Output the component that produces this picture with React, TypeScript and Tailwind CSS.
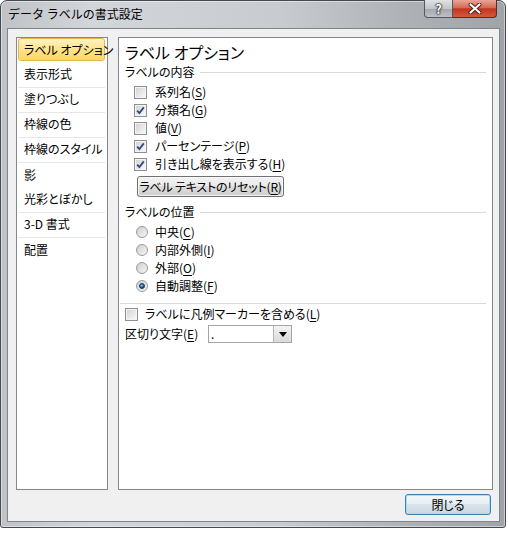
import * as React from 'react'

const fontClass = "font-['Noto_Sans_CJK_JP','Noto_Sans',sans-serif] [font-feature-settings:'palt']"

const navItems = [
  { label: 'ラベル オプション', selected: true, sep: false },
  { label: '表示形式', selected: false, sep: true },
  { label: '塗りつぶし', selected: false, sep: true },
  { label: '枠線の色', selected: false, sep: true },
  { label: '枠線のスタイル', selected: false, sep: true },
  { label: '影', selected: false, sep: false },
  { label: '光彩とぼかし', selected: false, sep: true },
  { label: '3-D 書式', selected: false, sep: true },
  { label: '配置', selected: false, sep: false },
]

function Key({ k }: { k: string }) {
  return (
    <>
      (<span className="underline underline-offset-2">{k}</span>)
    </>
  )
}

function CheckBox({ checked }: { checked: boolean }) {
  return (
    <span className="flex h-[13px] w-[13px] shrink-0 items-center justify-center border border-[#8e8f8f] bg-white">
      <span className="flex h-[11px] w-[11px] items-center justify-center border border-[#f4f4f4] bg-[linear-gradient(135deg,#d4d4d4,#f7f7f7)]">
        {checked && (
          <svg width="9" height="9" viewBox="0 0 9 9">
            <path d="M1.2 4.6 L3.4 7 L7.8 1.4" fill="none" stroke="#33477a" strokeWidth="1.8" />
          </svg>
        )}
      </span>
    </span>
  )
}

function Radio({ checked }: { checked: boolean }) {
  return (
    <span className="flex h-[12px] w-[12px] shrink-0 items-center justify-center rounded-full border border-[#9a9a9a] bg-[linear-gradient(135deg,#cfcfcf,#f6f6f6)]">
      {checked && <span className="h-[6px] w-[6px] rounded-full border border-[#0c3560] bg-[radial-gradient(circle_at_40%_35%,#8cc4f0,#1d5c9c_60%,#0b2f58)]" />}
    </span>
  )
}

function SectionHeader({ text }: { text: string }) {
  return (
    <div className="flex h-[16px] items-center gap-[6px] leading-[16px]">
      <span>{text}</span>
      <span className="h-px flex-1 bg-[#d9d9d9]" />
    </div>
  )
}

export default function App() {
  const contents = [
    { label: '系列名', k: 'S', checked: false },
    { label: '分類名', k: 'G', checked: true },
    { label: '値', k: 'V', checked: false },
    { label: 'パーセンテージ', k: 'P', checked: true },
    { label: '引き出し線を表示する', k: 'H', checked: true },
  ]
  const positions = [
    { label: '中央', k: 'C', checked: false },
    { label: '内部外側', k: 'I', checked: false },
    { label: '外部', k: 'O', checked: false },
    { label: '自動調整', k: 'F', checked: true },
  ]

  return (
    <div className={`h-[538px] w-[508px] bg-white text-[12px] text-black ${fontClass}`}>
      <div className="relative flex h-[528px] w-[506px] flex-col rounded-t-[7px] rounded-b-[3px] border border-[#464a50] bg-[linear-gradient(90deg,#bfc3c8_0%,#d2d5d9_18%,#c8cbcf_55%,#aeb1b5_80%,#a0a3a7_100%)] shadow-[inset_0_0_0_1px_rgba(255,255,255,0.45)]">
        <div className="flex h-[27px] shrink-0 items-center pl-[7px] pb-[1px]">
          <span className="text-[12px] leading-none [font-feature-settings:normal]">データ ラベルの書式設定</span>
        </div>

        <div className="absolute right-[8px] top-[-1px] flex h-[18px]">
          <div className="flex w-[29px] items-center justify-center rounded-bl-[4px] border border-t-0 border-[#55585e] bg-[linear-gradient(180deg,#e0e2e5_0%,#c3c6ca_50%,#a4a7ac_52%,#bdc0c4_100%)]">
            <span className="text-[13px] font-bold leading-none text-white [text-shadow:0_0_1px_#222,0_0_1px_#222,0_0_2px_#333,0_0_2px_#333]">?</span>
          </div>
          <div className="flex w-[44px] items-center justify-center rounded-br-[4px] border border-l-0 border-t-0 border-[#5a2a24] bg-[linear-gradient(180deg,#e9a597_0%,#d66a54_45%,#c3341f_52%,#d25a3b_100%)]">
            <svg width="14" height="11" viewBox="0 0 14 11">
              <path d="M2.5 1.5 L11.5 9.5 M11.5 1.5 L2.5 9.5" stroke="#4a1a14" strokeWidth="4" strokeLinecap="round" />
              <path d="M2.5 1.5 L11.5 9.5 M11.5 1.5 L2.5 9.5" stroke="#ffffff" strokeWidth="2.2" strokeLinecap="round" />
            </svg>
          </div>
        </div>

        <div className="mb-[5px] ml-[6px] mr-[5px] flex flex-1 flex-col border border-[#7f858c] bg-[#f0f0f0] pb-[6px] pl-[8px] pr-[6px] pt-[8px]">
          <div className="flex min-h-0 flex-1 gap-[10px]">
            <div className="w-[92px] shrink-0 border border-[#828790] bg-white">
              {navItems.map((item) => (
                <div key={item.label} className="h-[25px] pl-[1px] pr-[2px]">
                  <div
                    className={
                      item.selected
                        ? 'flex h-[23px] items-center rounded-[3px] border border-[#e2b84e] bg-[linear-gradient(180deg,#fff3c4_0%,#ffe58f_45%,#ffd862_100%)] pl-[5px] whitespace-nowrap'
                        : item.sep
                          ? 'flex h-[25px] items-center border-b border-[#e6e6e6] pb-[2px] pl-[6px] whitespace-nowrap'
                          : 'flex h-[25px] items-center pb-[2px] pl-[6px] whitespace-nowrap'
                    }
                  >
                    {item.label}
                  </div>
                </div>
              ))}
            </div>

            <div className="w-[375px] shrink-0 border border-[#828790] bg-white pl-[6px] pr-[6px] pt-[4px]">
              <div className="h-[20px] text-[16px] leading-[20px]">ラベル オプション</div>

              <div className="mt-[2px]">
                <SectionHeader text="ラベルの内容" />
              </div>
              <div className="mt-[3px] pl-[9px]">
                {contents.map((c) => (
                  <div key={c.label} className="flex h-[18px] items-center gap-[8px]">
                    <CheckBox checked={c.checked} />
                    <span className="leading-[18px]">
                      {c.label}
                      <Key k={c.k} />
                    </span>
                  </div>
                ))}
              </div>
              <div className="mt-[3px] pl-[12px]">
                <button
                  type="button"
                  className="flex h-[21px] w-[147px] items-center justify-center rounded-[3px] border border-[#707070] bg-[linear-gradient(180deg,#f2f2f2_0%,#ebebeb_45%,#dddddd_50%,#cfcfcf_100%)] text-[12px] shadow-[inset_0_0_0_1px_rgba(255,255,255,0.7)]"
                >
                  <span className="whitespace-nowrap leading-[18px] tracking-[-0.2px]">
                    ラベル テキストのリセット
                    <Key k="R" />
                  </span>
                </button>
              </div>

              <div className="mt-[7px]">
                <SectionHeader text="ラベルの位置" />
              </div>
              <div className="mt-[3px] pl-[11px]">
                {positions.map((p) => (
                  <div key={p.label} className="flex h-[18px] items-center gap-[7px]">
                    <Radio checked={p.checked} />
                    <span className="leading-[18px]">
                      {p.label}
                      <Key k={p.k} />
                    </span>
                  </div>
                ))}
              </div>

              <div className="-ml-[5px] mt-[8px] h-px bg-[#d9d9d9]" />

              <div className="mt-[1px] flex h-[18px] items-center gap-[7px]">
                <CheckBox checked={false} />
                <span className="leading-[18px]">
                  ラベルに凡例マーカーを含める
                  <Key k="L" />
                </span>
              </div>

              <div className="mt-[2px] flex h-[18px] items-center">
                <span className="w-[83px] leading-[18px]">
                  区切り文字
                  <Key k="E" />
                </span>
                <div className="flex h-[18px] w-[84px] border border-[#a5a5a5] bg-white">
                  <span className="flex-1 pl-[2px] leading-[15px]">.</span>
                  <span className="flex w-[18px] items-center justify-center border-l border-[#b5b5b5] bg-[linear-gradient(180deg,#f3f3f3,#dadada)]">
                    <svg width="8" height="5" viewBox="0 0 8 5">
                      <path d="M0 0 H8 L4 5 Z" fill="#000" />
                    </svg>
                  </span>
                </div>
              </div>
            </div>
          </div>

          <div className="mt-[4px] flex justify-end pr-[2px]">
            <button
              type="button"
              className="flex h-[21px] w-[86px] items-center justify-center rounded-[3px] border border-[#3c7fb1] bg-[linear-gradient(180deg,#f4f8fb_0%,#e8eef3_45%,#d9e3eb_50%,#cbd8e2_100%)] text-[12px] shadow-[inset_0_0_0_1px_rgba(160,220,250,0.9)]"
            >
              閉じる
            </button>
          </div>
        </div>
      </div>
    </div>
  )
}
